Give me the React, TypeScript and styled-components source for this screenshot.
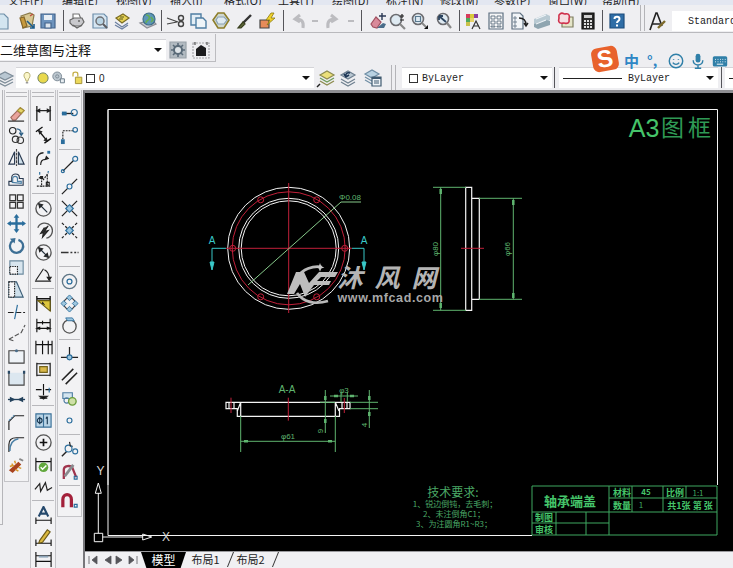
import React from 'react';
import styled, { createGlobalStyle } from 'styled-components';

const GlobalStyle = createGlobalStyle`
  html, body {
    margin: 0;
    padding: 0;
    background: #eeeef1;
    overflow: hidden;
  }
`;

const UI_FONT = '"Noto Sans CJK SC", "Liberation Sans", sans-serif';
const MONO_FONT = '"Liberation Mono", monospace';

const Page = styled.div`
  position: relative;
  width: 733px;
  height: 568px;
  display: flex;
  flex-direction: column;
  overflow: hidden;
  background: #eeeef1;
  font-family: ${UI_FONT};
  color: #111;
`;

const MenuBar = styled.div`
  height: 5px;
  flex: none;
  display: flex;
  align-items: flex-end;
  padding-left: 8px;
  gap: 15px;
  background: #e3e7f1;
  overflow: hidden;
`;

const MenuItem = styled.span`
  flex: none;
  width: 39px;
  font-size: 11px;
  line-height: 11px;
  margin-bottom: -1px;
  white-space: nowrap;
  color: #222;
`;

const ToolRow = styled.div`
  height: 28px;
  flex: none;
  display: flex;
  align-items: flex-end;
  padding-bottom: 1px;
  box-sizing: border-box;
  border-bottom: 1px solid #b9b9bd;
  background: #efeff2;
`;

const GroupRow = styled.div`
  height: 31px;
  flex: none;
  margin-top: 1px;
  display: flex;
  align-items: flex-start;
`;

const WorkspaceGroup = styled.div`
  width: 216px;
  height: 28px;
  box-sizing: border-box;
  display: flex;
  align-items: center;
  padding-top: 4px;
  border-right: 1px solid #bcbcc0;
  border-bottom: 1px solid #bcbcc0;
`;

const LayerRow = styled.div`
  height: 25px;
  flex: none;
  display: flex;
  align-items: center;
`;

const Slot = styled.div<{ $gap: number }>`
  flex: none;
  margin-left: ${(p) => p.$gap}px;
  display: flex;
  align-items: center;
  justify-content: center;
`;

const Sep = styled.div<{ $gap: number }>`
  flex: none;
  width: 1px;
  height: 21px;
  margin-left: ${(p) => p.$gap}px;
  background: #55555a;
`;

const Grip = styled.div<{ $gap: number }>`
  flex: none;
  width: 5px;
  box-sizing: border-box;
  align-self: stretch;
  margin-left: ${(p) => p.$gap}px;
  border-left: 1px solid #b4b4b8;
  border-right: 1px solid #b4b4b8;
`;

const Combo = styled.div<{ $w: number; $gap: number }>`
  flex: none;
  width: ${(p) => p.$w}px;
  height: 21px;
  margin-left: ${(p) => p.$gap}px;
  box-sizing: border-box;
  display: flex;
  align-items: center;
  position: relative;
  background: #fff;
  border-top: 1px solid #d4d4d8;
`;

const ComboArrow = styled.i`
  position: absolute;
  right: 4px;
  top: 8px;
  width: 0;
  height: 0;
  border-left: 4px solid transparent;
  border-right: 4px solid transparent;
  border-top: 4px solid #111;
`;

const WorkspaceLabel = styled.span`
  font-size: 13px;
  line-height: 20px;
  color: #111;
`;

const MonoLabel = styled.span<{ $gap?: number }>`
  font-family: ${MONO_FONT};
  font-size: 10px;
  color: #222;
  margin-left: ${(p) => p.$gap ?? 0}px;
  white-space: nowrap;
`;

const ZeroLabel = styled.span`
  font-family: "Liberation Sans", sans-serif;
  font-size: 10px;
  margin-left: 4px;
  color: #222;
`;

const Swatch = styled.i<{ $gap: number }>`
  flex: none;
  width: 9px;
  height: 9px;
  margin-left: ${(p) => p.$gap}px;
  box-sizing: border-box;
  border: 1px solid #333;
  background: #fff;
`;

const LineSample = styled.i`
  flex: none;
  width: 59px;
  height: 1px;
  margin-left: 4px;
  background: #222;
`;

const StyleInput = styled.div`
  flex: none;
  width: 61px;
  height: 20px;
  margin-left: 5px;
  display: flex;
  align-items: center;
  padding-left: 16px;
  box-sizing: border-box;
  background: #fff;
`;

const IconSvg = styled.svg<{ $size?: number }>`
  display: block;
  flex: none;
  width: ${(p) => p.$size ?? 20}px;
  height: ${(p) => p.$size ?? 20}px;
  fill: none;
  stroke: #222;
  stroke-width: 1.2;
`;

const Workspace = styled.div`
  flex: 1;
  min-height: 0;
  display: flex;
`;

const Docks = styled.div`
  flex: none;
  width: 83px;
  display: flex;
  align-items: flex-start;
  gap: 1px;
`;

const Stub = styled.div`
  flex: none;
  width: 3px;
  height: 435px;
  box-sizing: border-box;
  background: #f1f1f3;
  border-right: 1px solid #b5b5b9;
  border-bottom: 1px solid #b5b5b9;
`;

const DockColumn = styled.div<{ $w: number }>`
  flex: none;
  width: ${(p) => p.$w}px;
  box-sizing: border-box;
  padding-bottom: 5px;
  background: #f2f2f4;
  border: solid #c4c4c8;
  border-width: 0 1px 1px 1px;
`;

const DockGrip = styled.div`
  height: 5px;
  box-sizing: border-box;
  margin: 2px 1px 5px;
  border-top: 1px solid #b8b8bc;
  border-bottom: 1px solid #b8b8bc;
`;

const DockCell = styled.div`
  height: 22px;
  display: flex;
  align-items: center;
  justify-content: center;
`;

const DockSep = styled.div`
  height: 1px;
  margin: 3px 1px;
  background: #b8b8bc;
`;

const CanvasColumn = styled.div`
  flex: 1;
  min-width: 0;
  display: flex;
  flex-direction: column;
  border-top: 3px solid #8e8e92;
  border-left: 2px solid #77777b;
`;

const Canvas = styled.svg`
  display: block;
  flex: 1;
  min-height: 0;
  width: 100%;
  background: #000;
`;

const Stroke = styled.g<{ $c: string; $w?: number }>`
  fill: none;
  stroke: ${(p) => p.$c};
  stroke-width: ${(p) => p.$w ?? 1};
`;

const CadText = styled.text<{ $c: string; $size: number; $bold?: boolean; $mono?: boolean }>`
  fill: ${(p) => p.$c};
  stroke: none;
  font-family: ${(p) => (p.$mono ? '"Liberation Sans", sans-serif' : UI_FONT)};
  font-size: ${(p) => p.$size}px;
  font-weight: ${(p) => (p.$bold ? 700 : 400)};
  text-anchor: middle;
`;

const TabStrip = styled.div`
  height: 17px;
  flex: none;
  display: flex;
  align-items: flex-start;
  background: #f0f0f3;
  border-top: 1px solid #9a9a9e;
  box-sizing: border-box;
`;

const NavButton = styled.div<{ $gap: number }>`
  flex: none;
  width: 14px;
  height: 14px;
  margin: 1px 0 0 ${(p) => p.$gap}px;
  display: flex;
  align-items: center;
  justify-content: center;
`;

const ModelTab = styled.div`
  flex: none;
  width: 45px;
  height: 16px;
  margin-left: 1px;
  text-align: center;
  background: #000;
  color: #fff;
  font-size: 12px;
  line-height: 15px;
  clip-path: polygon(0 0, 100% 0, 88% 100%, 12% 100%);
`;

const LayoutTab = styled.div`
  flex: none;
  position: relative;
  width: 45px;
  height: 16px;
  box-sizing: border-box;
  padding-right: 6px;
  text-align: center;
  font-size: 11px;
  line-height: 15px;
  color: #222;

  &::after {
    content: '';
    position: absolute;
    right: 0;
    top: 0;
    width: 1px;
    height: 15px;
    background: #333;
    transform: skewX(-22deg);
  }
`;

const ImeBar = styled.div`
  position: absolute;
  left: 592px;
  top: 45px;
  width: 141px;
  height: 27px;
  display: flex;
  align-items: center;
  color: #2f86c5;
`;

const ImeLogo = styled.div`
  flex: none;
  width: 26px;
  height: 24px;
  border-radius: 6px;
  background: #e8622c;
  transform: rotate(-10deg);
  display: flex;
  align-items: center;
  justify-content: center;
  color: #fff;
  font-family: "Liberation Sans", sans-serif;
  font-size: 24px;
  font-weight: 700;
  line-height: 24px;
`;

const ImeGlyph = styled.span<{ $gap: number; $size: number }>`
  flex: none;
  margin-left: ${(p) => p.$gap}px;
  font-size: ${(p) => p.$size}px;
  font-weight: 700;
  line-height: 27px;
  padding-top: 3px;
`;

const ImeIcon = styled.span<{ $gap: number }>`
  flex: none;
  margin-left: ${(p) => p.$gap}px;
  margin-top: 5px;
`;

const BLUE = '#2f7fa8';
const DISABLED = '#bcbcc0';

const icons: Record<string, React.ReactNode> = {
  newdoc: <path d="M2 3h10l4 4v11H2z" fill="#d3e5f0" stroke="#6f8fa8" />,
  open: (
    <>
      <path d="M3 5l9-3 4 2-2 11-9 2z" fill="#d8c893" stroke="#8a7a4a" />
      <path d="M2 7l4-1 3 9-4 2z" fill="#c79a3d" stroke="#84662a" />
      <path d="M9 10l7 7m-4 0h4v-4" stroke="#1d5c8a" strokeWidth="1.6" />
      <path d="M12 5l3-2" stroke="#c0483a" />
    </>
  ),
  save: (
    <>
      <path d="M3 3h14v14H3z" fill="#6d93bd" stroke="#44648c" />
      <path d="M6 4h8v5H6z" fill="#e8eef4" stroke="none" />
      <path d="M7 12h6v5H7z" fill="#dce5ee" stroke="#44648c" />
    </>
  ),
  plot: (
    <>
      <path d="M6 3h6l2 5H6z" fill="#fff" stroke="#777" />
      <path d="M3 9l4-2h8l2 4-3 4H6l-3-3z" fill="#c9c9cd" stroke="#666" />
      <path d="M6 14l4 3 5-3" stroke="#666" />
      <circle cx="12" cy="10" r="1" fill="#666" stroke="none" />
    </>
  ),
  preview: (
    <>
      <path d="M3 3h11l3 3v11H3z" fill="#d6e6f2" stroke="#6d8eaa" />
      <circle cx="10" cy="10" r="4" fill="#b9d4e4" stroke="#6f6f73" strokeWidth="1.5" />
      <path d="M13 13l4 4" stroke="#5b5b5f" strokeWidth="2" />
    </>
  ),
  publish: (
    <>
      <path d="M4 7l7-4 6 4-7 5z" fill="#e8d355" stroke="#7b6c22" />
      <path d="M3 11l7 5 6-4" stroke="#6b7fa0" />
      <path d="M3 14l7 4 6-4" stroke="#6b7fa0" />
      <path d="M8 6h4M7 8h4" stroke="#5a5a20" />
    </>
  ),
  globe: (
    <>
      <path d="M2 12l7 5 9-4-4-4z" fill="#c9cbd2" stroke="#8a8c94" />
      <circle cx="11" cy="8" r="6" fill="#5d97b8" stroke="#3f6f8a" />
      <path d="M8 4c3 0 4 2 3 4s-3 1-3 4M13 6l2 3-2 2" stroke="#65ad55" strokeWidth="1.6" />
    </>
  ),
  cut: (
    <>
      <path d="M1 7l11 4M1 13l10-2" stroke="#444" />
      <circle cx="15" cy="7" r="2.5" stroke="#444" strokeWidth="1.4" />
      <circle cx="15" cy="13" r="2.5" stroke="#444" strokeWidth="1.4" />
    </>
  ),
  copy: (
    <>
      <path d="M2 3h10v11H2z" fill="#e2edf5" stroke="#4f7ea3" strokeWidth="1.4" />
      <path d="M7 7h7l3 3v7H7z" fill="#eef4f8" stroke="#4f7ea3" strokeWidth="1.4" />
    </>
  ),
  paste: (
    <>
      <path d="M7 2h6l5 7-5 8H7L2 9z" fill="#cfd7cf" stroke="#8d7e2a" strokeWidth="1.6" />
      <path d="M7 6h6l3 3-3 4H7L5 9z" fill="#dfeaf1" stroke="#8aa2b5" />
    </>
  ),
  match: (
    <>
      <path d="M16 4L8 12" stroke="#333" strokeWidth="2.4" />
      <path d="M8 11l2 2-4 4H3z" fill="#5f6b3a" stroke="#3a4020" />
    </>
  ),
  block: (
    <>
      <path d="M2 9h9v8H2z" fill="#e78b5a" stroke="#444" />
      <path d="M13 2l-5 7h4l-3 5 8-7h-4l3-5z" fill="#f1d22c" stroke="#8a7a10" strokeWidth="0.8" />
    </>
  ),
  undo: <path d="M15 17c1-6-1-9-7-9M12 4L7 8l5 3" stroke={DISABLED} strokeWidth="3" />,
  redo: <path d="M5 17c-1-6 1-9 7-9M8 4l5 4-5 3" stroke={DISABLED} strokeWidth="3" />,
  pan: (
    <>
      <path d="M3 13l5-7 5 5-4 6-4-1z" fill="#d98a9a" stroke="#a0505f" />
      <path d="M14 2v7M11 5h7" stroke="#2c3a55" strokeWidth="1.4" />
      <path d="M9 17h7l2-4-3-1z" fill="#4a6d8a" stroke="none" />
    </>
  ),
  zoomrt: (
    <>
      <circle cx="8" cy="9" r="5.5" fill="#dfeaf2" stroke="#6c6c70" strokeWidth="1.6" />
      <path d="M12 13l5 5" stroke="#888" strokeWidth="2.2" />
      <path d="M14 3v4M12 5h4M12 9h4" stroke="#222" />
    </>
  ),
  zoomwin: (
    <>
      <circle cx="8" cy="8" r="5.5" fill="#dfeaf2" stroke="#6c6c70" strokeWidth="1.6" />
      <path d="M5.5 5.5h5v5h-5z" stroke="#5a7a90" />
      <path d="M12 12l4 4" stroke="#888" strokeWidth="2" />
      <path d="M14 18h4v-4z" fill="#111" stroke="none" />
    </>
  ),
  zoomprev: (
    <>
      <circle cx="9" cy="8" r="5.5" fill="#dfeaf2" stroke="#6c6c70" strokeWidth="1.6" />
      <path d="M13 12l4 5" stroke="#888" strokeWidth="2.2" />
      <path d="M5 5l7 6M5 5v4M5 5h4" stroke="#2d4560" strokeWidth="1.8" />
    </>
  ),
  prop: (
    <>
      <path d="M3 3h4v4H3z" fill="#d73c5c" stroke="none" />
      <path d="M7 3h4v4H7z" fill="#d8c93a" stroke="none" />
      <path d="M11 3h4v4h-4z" fill="#8a3ea0" stroke="none" />
      <path d="M3 7h4v4H3z" fill="#4fa85c" stroke="none" />
      <path d="M7 7h4v4H7z" fill="#e7d26b" stroke="none" />
      <path d="M3 11h4v4H3z" fill="#c9c14a" stroke="none" />
      <path d="M9 18l4-8 4 8M10.5 15h5" stroke="#333" />
    </>
  ),
  design: (
    <>
      <path d="M3 2h14v16H3z" fill="#f5f5f6" stroke="#5d6f80" />
      <path d="M5 5h4v3H5zM11 5h4v3h-4zM5 10h4v3H5zM11 10h4v3h-4zM5 15h4v1H5zM11 15h4v1h-4z" stroke="#5d6f80" strokeWidth="0.9" />
    </>
  ),
  toolp: (
    <>
      <path d="M3 2h8l3 3v13H3z" fill="#f2f5f8" stroke="#5d6f80" />
      <path d="M5 6h2v2H5zM5 10h2v2H5zM5 14h2v2H5z" stroke="#5d6f80" strokeWidth="0.8" />
      <path d="M10 7c5 0 7 2 7 7M15 12l2 3 2-3" stroke="#222" strokeWidth="1.4" />
    </>
  ),
  sheet: (
    <>
      <path d="M2 8l12-5 4 2v4L6 15 2 13z" fill="#b8c9d2" stroke="none" />
      <path d="M2 13l12-4 4 1v4L6 18l-4-2z" fill="#8fa5b0" stroke="none" />
      <path d="M4 8l10-4M4 13l10-4" stroke="#eef3f6" />
    </>
  ),
  markup: (
    <>
      <path d="M7 16h11V6H7z" fill="#e5e5c8" stroke="#7f7f60" />
      <path d="M5 3c2-2 4 0 5 0s3-1 4 1 0 3 0 4 1 3-1 4-3 0-4 0-4 1-5-1 0-3 0-4-1-3 1-4z" fill="#f6dfe2" stroke="#cf2f4a" strokeWidth="1.6" />
    </>
  ),
  calc: (
    <>
      <path d="M4 2h12v16H4z" fill="#2a2a2a" stroke="#111" />
      <path d="M6 4h8v3H6z" fill="#cfcfcf" stroke="none" />
      <path d="M6 9h2v2H6zM9 9h2v2H9zM12 9h2v2h-2zM6 12h2v2H6zM9 12h2v2H9zM12 12h2v2h-2zM6 15h2v2H6zM9 15h2v2H9zM12 15h2v2h-2z" fill="#ddd" stroke="none" />
    </>
  ),
  help: (
    <>
      <path d="M3 3h14v14H3z" fill="#2f6da6" stroke="#1d4d7c" />
      <path d="M7.5 8c0-3 5-3 5 0 0 2-2.5 2-2.5 4M10 13.5v2" stroke="#fff" strokeWidth="2" />
    </>
  ),
  textstyle: (
    <>
      <path d="M3 19L9 2h1l5 13M5 13h8" stroke="#222" strokeWidth="1.6" />
      <path d="M11 17l7-7" stroke="#7d6a2a" strokeWidth="2.4" />
    </>
  ),
  wsgear: (
    <>
      <path d="M2 2h16v16H2z" fill="#b2bac1" stroke="#9aa2a9" />
      <circle cx="10" cy="10" r="4" fill="#dfe4e8" stroke="#5a6a78" strokeWidth="2" />
      <path d="M10 3v3M10 14v3M3 10h3M14 10h3M5 5l2 2M13 13l2 2M15 5l-2 2M7 13l-2 2" stroke="#5a6a78" strokeWidth="1.6" />
    </>
  ),
  wsdark: (
    <>
      <path d="M2 3h16v15H2z" stroke="#a6a6aa" strokeDasharray="2 1" />
      <path d="M5 9l5-4 5 3v8H5z" fill="#1c1c1e" stroke="none" />
      <path d="M4 2v3M16 2v3" stroke="#555" />
    </>
  ),
  layers: (
    <>
      <path d="M2 8l8-4 8 4-8 4z" fill="#b9c7d2" stroke="#7d8c98" />
      <path d="M2 11l8 4 8-4M2 14l8 4 8-4" stroke="#7d8c98" />
    </>
  ),
  layersYellow: (
    <>
      <path d="M4 7l7-4 7 4-7 4z" fill="#ece07a" stroke="#8e8c50" />
      <path d="M4 10l7 4 7-4" stroke="#6f9c5a" strokeWidth="1.4" />
      <path d="M4 13l7 4 7-4" stroke="#8e8c50" strokeWidth="1.4" />
      <path d="M1 19l3-3" stroke="#222" strokeWidth="1.4" />
    </>
  ),
  layersBack: (
    <>
      <path d="M3 7l7-4 7 4-7 4z" fill="#b9c7d2" stroke="#6f8090" />
      <path d="M3 11l7 4 7-4M3 14l7 4 7-4" stroke="#6f8090" />
      <path d="M12 5c-3-1-5 1-4 4M6 6l2 3 3-2" stroke="#1c3555" strokeWidth="1.6" />
    </>
  ),
  layersDoc: (
    <>
      <path d="M2 6l7-4 7 4-7 4z" fill="#b9d2e2" stroke="#6f8ea5" />
      <path d="M2 9l7 4M2 12l7 4" stroke="#6f8ea5" />
      <path d="M9 9h9v9H9z" fill="#eef3f7" stroke="#405a70" />
      <path d="M9 9h9v2H9z" fill="#405a70" stroke="none" />
      <path d="M11 13h5M11 15h5" stroke="#405a70" />
    </>
  ),
  bulb: (
    <>
      <path d="M8 11C5 8 6 3 10 3s5 5 2 8l-1 3H9z" fill="#fbf6c8" stroke="#b0a768" />
      <path d="M8.5 16h3" stroke="#777" strokeWidth="1.4" />
    </>
  ),
  sun: <circle cx="10" cy="10" r="6.4" fill="#e9d94d" stroke="#6e7f60" strokeWidth="1.2" />,
  freeze: (
    <>
      <circle cx="9" cy="8" r="5.5" fill="#bcc7cf" stroke="#7e8c98" />
      <circle cx="9" cy="8" r="2" stroke="#7e8c98" />
      <path d="M13 11h5v5h-5z" fill="#e8eef2" stroke="#6b7b88" />
    </>
  ),
  lock: (
    <>
      <path d="M5 8V5c0-3 6-3 6 0v3" stroke="#c5b04a" strokeWidth="1.6" />
      <path d="M8 9h8v8H8z" fill="#ecd95c" stroke="#a59336" />
    </>
  ),
  eraser: (
    <>
      <path d="M4 14L14 4l4 3-9 10H6z" fill="#e9a49c" stroke="#a06c60" />
      <path d="M11 7l4 4" stroke="#a06c60" />
      <path d="M14 4l4 3-3 3-4-3z" fill="#e6d46a" stroke="#a59336" />
      <path d="M1 18h17" stroke="#222" />
    </>
  ),
  copyObj: (
    <>
      <circle cx="6" cy="5" r="3.4" />
      <circle cx="9" cy="14" r="3.4" stroke="#333" />
      <circle cx="14" cy="15" r="3.4" stroke="#333" />
      <path d="M10 3c4 0 5 3 5 6M13 7l2 3 2-3" stroke="#2d5f85" strokeWidth="1.3" />
    </>
  ),
  mirror: (
    <>
      <path d="M10 1v18" strokeDasharray="3 1" stroke="#444" />
      <path d="M8 4v13H2z" stroke="#2a3a50" />
      <path d="M12 4v13h6z" stroke="#2a3a50" fill="#cfe0eb" />
    </>
  ),
  offset: (
    <>
      <path d="M2 16v-4h3V8c0-5 8-5 8 0v1h4v7z" stroke="#2a3a50" />
      <path d="M5 13h1V9c0-3 5-3 5 0v3h4v2z" stroke="#4a7fa5" />
    </>
  ),
  array: <path d="M3 3h6v6H3zM11 3h6v6h-6zM3 11h6v6H3zM11 11h6v6h-6z" strokeWidth="1.3" stroke="#333" />,
  move: (
    <>
      <path d="M10 2v16M2 10h16" stroke="#2a6d9c" strokeWidth="2.4" />
      <path d="M10 0l3 4H7zM10 20l3-4H7zM0 10l4-3v6zM20 10l-4-3v6z" fill="#2a6d9c" stroke="none" />
    </>
  ),
  rotate: (
    <>
      <path d="M6 5a7 7 0 1 0 6-1" stroke="#3d6f95" strokeWidth="2.4" />
      <path d="M3 3l6-1-1 6z" fill="#3d6f95" stroke="none" />
    </>
  ),
  scale: (
    <>
      <path d="M3 3h14v14H3z" fill="#d8e5ee" stroke="#6d8ba0" />
      <path d="M3 9h8v8H3z" fill="#f6f6f8" stroke="#222" strokeDasharray="1.5 1" />
    </>
  ),
  stretch: (
    <>
      <path d="M2 2h8l7 16H2z" fill="#cfe0eb" stroke="#3d5f78" />
      <path d="M2 2h6v16H2z" fill="#f6f6f8" stroke="#222" strokeDasharray="1.5 1" />
    </>
  ),
  trim: (
    <>
      <path d="M1 11h18" stroke="#222" strokeDasharray="6 2" />
      <path d="M11 3L8 18" stroke="#2a6d9c" />
    </>
  ),
  extend: <path d="M2 16L15 9l4-8M2 16l6 2" stroke="#555" strokeDasharray="5 2" />,
  breakRect: (
    <>
      <path d="M2 5h16v13H2z" fill="#eff3f7" stroke="#444" />
      <circle cx="10" cy="5" r="1.6" fill="#4a6d8a" stroke="none" />
    </>
  ),
  breakCorner: (
    <>
      <path d="M2 5v13h16V5" fill="#dce7f0" stroke="#444" />
      <path d="M2 3v3M18 3v3" stroke="#2a4a66" strokeWidth="2.4" />
    </>
  ),
  join: (
    <>
      <path d="M1 10h18" stroke="#23415c" strokeWidth="1.4" />
      <path d="M3 7l6 3-6 3zM17 7l-6 3 6 3z" fill="#23415c" stroke="none" />
    </>
  ),
  chamfer: (
    <>
      <path d="M2 19V10l6-6h10" stroke="#222" />
      <path d="M2 9l6-6" stroke="#5a8fb5" strokeDasharray="2 1" />
    </>
  ),
  fillet: (
    <>
      <path d="M2 19V11c0-5 3-7 8-7h8" stroke="#222" />
      <path d="M3 18c0-8 3-12 9-13" stroke="#4a7fa5" strokeWidth="1.6" />
    </>
  ),
  explode: (
    <>
      <path d="M2 15l10-9 3 3-9 9z" fill="#a8431f" stroke="none" />
      <path d="M5 8l2 3M9 14l3 2M3 11l3-1M12 12l3 1M8 5l1 3" stroke="#d9992d" strokeWidth="1.6" />
      <path d="M13 3l4 2" stroke="#888" strokeWidth="2" />
    </>
  ),
  dimLinear: (
    <>
      <path d="M3 2v16M17 2v16" strokeWidth="1.4" />
      <path d="M3 7h14" stroke="#111" />
      <path d="M3 7l3-1.5v3zM17 7l-3-1.5v3z" fill="#111" />
    </>
  ),
  dimAligned: (
    <>
      <path d="M2 6L9 1M11 18l7-5M5 5l9 11" stroke="#111" strokeWidth="1.4" />
      <path d="M5 5l1 3 2-2zM14 16l-1-3-2 2z" fill="#111" />
    </>
  ),
  dimArc: (
    <>
      <path d="M3 18V12c0-4 3-7 7-7" stroke="#222" strokeWidth="1.4" />
      <path d="M7 18c0-4 2-6 5-6" stroke="#222" />
      <path d="M14 3h3v3h-3z" fill="#2a6d9c" stroke="none" />
      <path d="M12 12l3-1-2-2z" fill="#222" />
    </>
  ),
  dimOrd: (
    <>
      <path d="M3 17h14M8 8v10M14 5v13M3 11l4-4 3 3 5-7" stroke="#222" strokeDasharray="2 1" />
      <path d="M7 7h2v2H7zM13 13h3v3h-3z" stroke="#222" />
      <path d="M6 2v3M15 1v2" stroke="#2a6d9c" />
    </>
  ),
  dimRadius: (
    <>
      <circle cx="10" cy="10" r="8" stroke="#555" strokeWidth="1.4" />
      <path d="M14 14L5 5" stroke="#23303c" />
      <path d="M5 5l4 1-3 3z" fill="#23303c" />
    </>
  ),
  dimJog: (
    <>
      <path d="M4 7a8 8 0 1 1 9 11" stroke="#555" strokeWidth="1.4" />
      <path d="M15 5l-4 6 4-1-6 7 1-5-3 1 4-6" fill="#333" stroke="#222" />
    </>
  ),
  dimDia: (
    <>
      <circle cx="10" cy="10" r="8" stroke="#555" strokeWidth="1.4" />
      <path d="M5 5l10 10" stroke="#23303c" />
      <path d="M5 5l4 1-3 3zM15 15l-4-1 3-3z" fill="#23303c" />
    </>
  ),
  dimAng: (
    <>
      <path d="M1 17h17M2 16L10 4" stroke="#222" />
      <path d="M11 5c4 2 5 7 5 10" stroke="#222" />
      <path d="M16 16l-2-3h4z" fill="#222" />
    </>
  ),
  quick: (
    <>
      <path d="M3 2v16M17 2v16M3 5h14" stroke="#111" strokeWidth="1.4" />
      <path d="M4 7l13 11V7z" fill="#ddc63c" stroke="#6a5c12" />
      <path d="M9 8l3 4-4-2z" fill="#222" stroke="none" />
    </>
  ),
  baseline: <path d="M3 3v14M17 3v14M3 7h14M3 13h14M9 5v4M3 13l3-1v2zM17 13l-3-1v2z" stroke="#111" />,
  contin: <path d="M2 3v14M9 3v14M15 3v14M19 3v14M2 7h17" stroke="#111" />,
  space: (
    <>
      <path d="M3 3v14M17 3v14M3 4h14M3 16h14" stroke="#111" />
      <path d="M6 7h8v6H6z" fill="#d9b84a" stroke="#76641c" />
    </>
  ),
  dimBreak: (
    <>
      <path d="M2 8h6M12 8h6M10 2v12M6 17h8" stroke="#111" />
      <path d="M6 15h8l-4 3z" fill="#111" />
      <path d="M16 6v5" stroke="#2a6d9c" />
    </>
  ),
  tol: (
    <>
      <path d="M2 3h16v14H2z" fill="#b9d4e6" stroke="#3a7098" />
      <path d="M10 3v14" stroke="#3a7098" />
      <circle cx="6" cy="10" r="2.5" stroke="#1c3b55" />
      <path d="M6 6v8M14 6v8M12.5 8l1.5-2" stroke="#1c3b55" strokeWidth="1.2" />
    </>
  ),
  centerMark: (
    <>
      <circle cx="10" cy="10" r="8" stroke="#555" strokeWidth="1.4" />
      <path d="M10 6v8M6 10h8" stroke="#111" strokeWidth="1.8" />
    </>
  ),
  inspect: (
    <>
      <path d="M2 3v14M18 3v14M2 7h16" stroke="#111" />
      <circle cx="10" cy="13" r="5" fill="#62a83e" stroke="none" />
      <path d="M7 13l2 2 4-4" stroke="#fff" strokeWidth="1.5" />
    </>
  ),
  jogLine: <path d="M1 13l5-6 1 8 5-9 2 8 5-3" stroke="#222" strokeWidth="1.3" />,
  dimText: (
    <>
      <path d="M5 11l5-10 5 10M7 8h6" stroke="#24486c" strokeWidth="2.2" />
      <path d="M2 12v7M18 12v7M2 15h16" stroke="#111" />
    </>
  ),
  dimEdit: (
    <>
      <path d="M2 12v7M18 12v7M2 16h16" stroke="#111" />
      <path d="M6 13l8-11 3 2-8 11-4 1z" fill="#dbb93e" stroke="#6d5a18" />
    </>
  ),
  dimUpdate: (
    <>
      <path d="M2 2v16M18 2v16M2 12h16M2 6h16" stroke="#111" />
      <path d="M5 7h10" stroke="#8ea5b8" strokeWidth="2" />
    </>
  ),
  snapEnd: (
    <>
      <path d="M2 10h12" stroke="#222" strokeWidth="1.4" />
      <path d="M2 8h5v4H2z" fill="#2a6d9c" stroke="none" />
      <circle cx="15" cy="9" r="3.2" stroke="#2a6d9c" />
    </>
  ),
  snapExt: (
    <>
      <path d="M3 14V5h11" stroke="#222" strokeDasharray="2 1" />
      <circle cx="16" cy="4" r="2.4" stroke="#2a6d9c" />
      <path d="M1 14h4v5H1z" fill="#2a6d9c" stroke="none" />
    </>
  ),
  snapLine: (
    <>
      <path d="M3 17L14 6" stroke="#222" strokeWidth="1.3" />
      <circle cx="16" cy="4" r="2.6" stroke="#2a6d9c" />
      <circle cx="3" cy="17" r="1.6" stroke="#2a6d9c" />
    </>
  ),
  snapMid: (
    <>
      <path d="M2 18L18 2" stroke="#222" strokeWidth="1.3" />
      <circle cx="10" cy="10" r="2.6" fill="#f2f2f4" stroke="#2a6d9c" />
    </>
  ),
  snapInt: (
    <>
      <path d="M2 2l16 16M18 2L2 18" stroke="#222" strokeWidth="1.3" />
      <path d="M10 6l4 4-4 4-4-4z" fill="#9ec6de" stroke="#2a6d9c" />
    </>
  ),
  snapApp: (
    <>
      <path d="M2 2l16 16M18 2L2 18" stroke="#222" strokeWidth="1.3" strokeDasharray="3 2" />
      <path d="M10 6l4 4-4 4-4-4z" fill="#9ec6de" stroke="#2a6d9c" />
    </>
  ),
  snapDash: <path d="M1 10h8M11 10h2M15 10h2M18.5 10h1" stroke="#333" strokeWidth="1.4" />,
  snapCenter: (
    <>
      <circle cx="10" cy="10" r="7.5" stroke="#5f7686" strokeWidth="1.4" />
      <circle cx="10" cy="10" r="2.6" stroke="#2a6d9c" strokeWidth="1.3" />
    </>
  ),
  snapQuad: (
    <>
      <circle cx="10" cy="10" r="6" stroke="#3d3d40" />
      <path d="M10 1l3 3-3 3-3-3zM10 13l3 3-3 3-3-3zM1 10l3-3 3 3-3 3zM13 10l3-3 3 3-3 3z" fill="#9ec6de" stroke="#2a6d9c" strokeWidth="0.9" />
    </>
  ),
  snapTan: (
    <>
      <circle cx="10" cy="11" r="7" stroke="#555" strokeWidth="1.4" />
      <path d="M6 2h7l2 3h-7z" fill="#9ec6de" stroke="#2a6d9c" strokeWidth="0.9" />
    </>
  ),
  snapPerp: (
    <>
      <path d="M1 13h18M10 2v11" stroke="#222" strokeWidth="1.3" />
      <circle cx="10" cy="13" r="2.6" fill="#9ec6de" stroke="#2a6d9c" />
    </>
  ),
  snapPar: <path d="M2 14L14 2M6 18L18 6" stroke="#222" strokeWidth="1.6" />,
  snapIns: (
    <>
      <path d="M3 4h10v6H3z" fill="#d3e5f0" stroke="#4f7ea3" />
      <circle cx="7" cy="12" r="2.8" stroke="#4f7ea3" />
      <circle cx="13" cy="13" r="4" fill="#cfe0a8" stroke="#6a9c3a" strokeWidth="1.4" />
    </>
  ),
  snapNode: <circle cx="10" cy="10" r="2.6" stroke="#2a6d9c" />,
  snapNear: (
    <>
      <path d="M2 17L13 6" stroke="#222" strokeWidth="1.5" />
      <circle cx="9" cy="9" r="3.6" fill="#f2f2f4" stroke="#2a6d9c" />
      <circle cx="16" cy="12" r="2.6" stroke="#2a6d9c" />
      <path d="M10 2l1 5" stroke="#222" />
    </>
  ),
  snapNone: (
    <>
      <path d="M4 18V8c0-4 7-5 9-2l4 10" stroke="#a0344c" strokeWidth="2.4" />
      <path d="M5 15L14 3" stroke="#8a8a8e" strokeWidth="3" />
      <path d="M15 15h3v3h-3z" stroke="#2a6d9c" />
    </>
  ),
  magnet: (
    <>
      <path d="M3 17V9c0-7 9-7 9 0v8" stroke="#a3203a" strokeWidth="3.4" />
      <path d="M15 14h3v3h-3z" stroke="#2a6d9c" strokeWidth="1.3" />
    </>
  ),
};

const Icon = ({ name, size }: { name: string; size?: number }) => (
  <IconSvg viewBox="0 0 20 20" $size={size}>
    {icons[name]}
  </IconSvg>
);

const CaretSvg = styled(IconSvg)`
  width: 8px;
`;

const Caret = ({ color }: { color: string }) => (
  <CaretSvg viewBox="0 0 8 20">
    <path d="M1 10h6" stroke={color} strokeWidth="2" />
  </CaretSvg>
);

// [gap before the item, item]
const topTools: [number, string][] = [
  [-8, 'newdoc'], [6, 'open'], [0, 'save'], [5, '|'], [3, 'plot'], [3, 'preview'], [2, 'publish'], [6, 'globe'],
  [3, '|'], [4, 'cut'], [3, 'copy'], [2, 'paste'], [4, 'match'], [3, 'block'], [5, '|'], [4, 'undo'], [3, '-'],
  [4, 'redo'], [4, '-'], [6, '|'], [6, 'pan'], [0, 'zoomrt'], [2, 'zoomwin'], [4, 'zoomprev'], [5, '|'],
  [3, 'prop'], [3, 'design'], [3, 'toolp'], [3, 'sheet'], [3, 'markup'], [3, 'calc'], [4, '|'], [4, 'help'],
];

const dockOne = ['eraser', 'copyObj', 'mirror', 'offset', 'array', 'move', 'rotate', 'scale', 'stretch', 'trim', 'extend', 'breakRect', 'breakCorner', 'join', 'chamfer', 'fillet', 'explode'];
const dockTwo = ['dimLinear', 'dimAligned', 'dimArc', 'dimOrd', '|', 'dimRadius', 'dimJog', 'dimDia', 'dimAng', '|', 'quick', 'baseline', 'contin', 'space', 'dimBreak', '|', 'tol', 'centerMark', 'inspect', 'jogLine', '|', 'dimText', 'dimEdit', 'dimUpdate'];
const dockThree = ['snapEnd', 'snapExt', '|', 'snapLine', 'snapMid', 'snapInt', 'snapApp', 'snapDash', '|', 'snapCenter', 'snapQuad', 'snapTan', '|', 'snapPerp', 'snapPar', 'snapIns', 'snapNode', '|', 'snapNear', 'snapNone', '|', 'magnet'];

const menus = ['文件(F)', '编辑(E)', '视图(V)', '插入(I)', '格式(O)', '工具(T)', '绘图(D)', '标注(N)', '修改(M)', '参数(P)', '窗口(W)', '帮助(H)'];

const Dock = ({ names, w }: { names: string[]; w: number }) => (
  <DockColumn $w={w}>
    <DockGrip />
    {names.map((name, i) =>
      name === '|' ? (
        <DockSep key={i} />
      ) : (
        <DockCell key={i}>
          <Icon name={name} size={19} />
        </DockCell>
      )
    )}
  </DockColumn>
);

const GREEN = '#5fb56f';
const BRIGHT = '#45c46a';
const RED = '#c2203a';
const CYAN = '#39c8c8';

const holes = [0, 60, 120, 180, 240, 300].map((a) => ({
  x: 288.7 + 56 * Math.cos((a * Math.PI) / 180),
  y: 248.3 + 56 * Math.sin((a * Math.PI) / 180),
}));

const Drawing = () => (
  <Canvas viewBox="85 93 648 458" preserveAspectRatio="xMinYMin slice">
    <Stroke $c="#f4f4f4">
      <path d="M108 485V109.5H717.5V485M108 109.5V535.5H532" />
    </Stroke>

    <CadText x="644" y="137" $c={BRIGHT} $size={25} $mono>A3</CadText>
    <CadText x="688" y="136" $c="#2f9a55" $size={23} letterSpacing="4">图框</CadText>

    {/* front view */}
    <Stroke $c="#f4f4f4">
      <circle cx="288.7" cy="248.3" r="61" />
      <circle cx="288.7" cy="248.3" r="50" />
      <circle cx="288.7" cy="248.3" r="47.5" />
    </Stroke>
    <Stroke $c={RED}>
      <circle cx="288.7" cy="248.3" r="56.5" />
      <path d="M226 248.3H352M288.7 183V313" />
      {holes.map((h, i) => (
        <circle key={i} cx={h.x} cy={h.y} r="3" />
      ))}
    </Stroke>
    <Stroke $c="#86c98a">
      <path d="M248 285L341 202H361" />
    </Stroke>
    <CadText x="350" y="200" $c={GREEN} $size={8} $mono>Φ0.08</CadText>
    <Stroke $c={CYAN}>
      <path d="M226 248.3H212V262M352 248.3H364V262" />
      <path d="M210 262h4l-2 8zM362 262h4l-2 8z" fill={CYAN} />
    </Stroke>
    <CadText x="212" y="244" $c={CYAN} $size={10} $mono>A</CadText>
    <CadText x="364" y="244" $c={CYAN} $size={10} $mono>A</CadText>

    {/* side view */}
    <Stroke $c="#f4f4f4" $w={1.2}>
      <path d="M465.7 187.3h6v123h-6zM471.7 198.3h7.6v101h-7.6z" />
    </Stroke>
    <Stroke $c={RED}>
      <path d="M461 248.3h23" />
    </Stroke>
    <Stroke $c={GREEN}>
      <path d="M433 187.3h33M433 310.3h33M440.7 187.3v123M479 198.3h43M479 299.3h43M513.3 198.3v101" />
    </Stroke>
    <Stroke $c={GREEN} $w={2.5}>
      <path d="M440.7 189v5M440.7 303v5M513.3 200v5M513.3 293v5" />
    </Stroke>
    <CadText x="0" y="0" $c={GREEN} $size={8} $mono transform="translate(438 249) rotate(-90)">φ80</CadText>
    <CadText x="0" y="0" $c={GREEN} $size={8} $mono transform="translate(510 249) rotate(-90)">φ66</CadText>

    {/* section */}
    <CadText x="287" y="393" $c={GREEN} $size={10} $mono>A-A</CadText>
    <Stroke $c="#f4f4f4" $w={1.2}>
      <path d="M226 402.3H350V408.7H339.5V416.3H237.3V408.7H226z" />
      <path d="M229 402.3v6.4M234 402.3v6.4M342 402.3v6.4M347 402.3v6.4M240.7 402.3L237.3 411M335.3 402.3L339 411M240.7 402.3V416M335.3 402.3V416" />
    </Stroke>
    <Stroke $c={RED}>
      <path d="M231 397.7v15.3M288.3 397.7v23M344.3 398v15" />
    </Stroke>
    <Stroke $c={GREEN}>
      <path d="M240.7 416v36M335.3 416v36M240.7 441.3h94.6M325.3 390v43M320 402.3h15M330 396h28M341 392v10M347.3 392v10M369.3 390v38M350 402.3h28M350 408.7h28" />
    </Stroke>
    <Stroke $c={GREEN} $w={2.5}>
      <path d="M244 441.3h4M328 441.3h4M325.3 396v4M325.3 419v4M334 396h4M350 396h4M369.3 396v4M369.3 412v4" />
    </Stroke>
    <CadText x="288" y="439" $c={GREEN} $size={8} $mono>φ61</CadText>
    <CadText x="344" y="393" $c={GREEN} $size={8} $mono>φ3</CadText>
    <CadText x="0" y="0" $c={GREEN} $size={8} $mono transform="translate(323 431) rotate(-90)">9</CadText>
    <CadText x="0" y="0" $c={GREEN} $size={8} $mono transform="translate(367 425) rotate(-90)">4</CadText>

    {/* notes */}
    <CadText x="453" y="497" $c="#4aa866" $size={12}>技术要求:</CadText>
    <CadText x="455" y="507" $c="#4aa866" $size={8}>1、锐边倒钝，去毛刺；</CadText>
    <CadText x="454" y="517" $c="#4aa866" $size={8}>2、未注倒角C1；</CadText>
    <CadText x="454" y="527" $c="#4aa866" $size={8}>3、为注圆角R1~R3；</CadText>

    {/* title block */}
    <Stroke $c="#3fa860">
      <path d="M532 486H717V535H532zM532 512H717M609 486V535M532 523H609M556 512V535M586 512V535M609 498H717M632 486V512M663 486V512M686 486V498" />
    </Stroke>
    <CadText x="570" y="506" $c={BRIGHT} $size={13} $bold>轴承端盖</CadText>
    <CadText x="622" y="496" $c={BRIGHT} $size={9} $bold>材料</CadText>
    <CadText x="646" y="495" $c={BRIGHT} $size={8} $bold>45</CadText>
    <CadText x="675" y="496" $c={BRIGHT} $size={9} $bold>比例</CadText>
    <CadText x="698" y="496" $c="#3fa860" $size={8}>1:1</CadText>
    <CadText x="622" y="509" $c={BRIGHT} $size={9} $bold>数量</CadText>
    <CadText x="641" y="508" $c="#3fa860" $size={8}>1</CadText>
    <CadText x="690" y="509" $c={BRIGHT} $size={9} $bold>共1张 第 张</CadText>
    <CadText x="544" y="521" $c={BRIGHT} $size={9} $bold>制图</CadText>
    <CadText x="544" y="533" $c={BRIGHT} $size={9} $bold>审核</CadText>

    {/* UCS icon */}
    <Stroke $c="#f4f4f4">
      <path d="M94.3 533.3h8.4v8.4h-8.4zM98.3 533.3V493M102.7 537H143" />
      <path d="M98.3 483l-3 10.3h6zM142.7 534v6l9-3z" />
    </Stroke>
    <CadText x="100.5" y="475" $c="#d8d8d8" $size={12} $mono>Y</CadText>
    <CadText x="166" y="541" $c="#d8d8d8" $size={12} $mono>X</CadText>

    {/* watermark */}
    <Stroke $c="#b9b9b9" $w={2.6}>
      <path d="M322 267a26 26 0 0 0-25 10M297 293c6 9 18 12 31 8" />
    </Stroke>
    <path d="M287 294l9-22h8l5 11 10-11h19l-3 5h-14l-4 4h14l-2 4h-15l-9 12-5-13-6 10z" fill="#bdbdbd" />
    <path d="M320 263l1.2 3.2 3.2 1.2-3.2 1.2-1.2 3.2-1.2-3.2-3.2-1.2 3.2-1.2z" fill="#c8c8c8" />
    <CadText x="393" y="287" $c="#b4b4b4" $size={25} $bold letterSpacing="12" fontStyle="italic">沐风网</CadText>
    <CadText x="390.5" y="302" $c="#a8a8a8" $size={12.5} $bold $mono letterSpacing="0.6">www.mfcad.com</CadText>
  </Canvas>
);

const Arrow = ({ d }: { d: string }) => (
  <IconSvg viewBox="0 0 12 12" $size={12}>
    <path d={d} fill="#55555a" stroke="#55555a" strokeWidth="0.8" />
  </IconSvg>
);

export default function App() {
  return (
    <Page>
      <GlobalStyle />
      <MenuBar>
        {menus.map((m) => (
          <MenuItem key={m}>{m}</MenuItem>
        ))}
      </MenuBar>

      <ToolRow>
        {topTools.map(([gap, name], i) =>
          name === '|' ? (
            <Sep key={i} $gap={gap} />
          ) : (
            <Slot key={i} $gap={gap}>
              {name === '-' ? <Caret color={DISABLED} /> : <Icon name={name} />}
            </Slot>
          )
        )}
        <Grip $gap={13} />
        <Slot $gap={2}>
          <Icon name="textstyle" />
        </Slot>
        <StyleInput>
          <MonoLabel>Standard</MonoLabel>
        </StyleInput>
      </ToolRow>

      <GroupRow>
        <WorkspaceGroup>
          <Combo $w={166} $gap={0}>
            <WorkspaceLabel>二维草图与注释</WorkspaceLabel>
            <ComboArrow />
          </Combo>
          <Slot $gap={2}>
            <Icon name="wsgear" />
          </Slot>
          <Slot $gap={3}>
            <Icon name="wsdark" />
          </Slot>
        </WorkspaceGroup>
      </GroupRow>

      <LayerRow>
        <Slot $gap={-5}>
          <Icon name="layers" />
        </Slot>
        <Combo $w={298} $gap={1}>
          <Slot $gap={3}>
            <Icon name="bulb" size={16} />
          </Slot>
          <Slot $gap={0}>
            <Icon name="sun" size={16} />
          </Slot>
          <Slot $gap={-1}>
            <Icon name="freeze" size={16} />
          </Slot>
          <Slot $gap={3}>
            <Icon name="lock" size={16} />
          </Slot>
          <Swatch $gap={1} />
          <ZeroLabel>0</ZeroLabel>
          <ComboArrow />
        </Combo>
        <Slot $gap={2}>
          <Icon name="layersYellow" />
        </Slot>
        <Slot $gap={2}>
          <Icon name="layersBack" />
        </Slot>
        <Slot $gap={5}>
          <Icon name="layersDoc" />
        </Slot>
        <Grip $gap={8} />
        <Combo $w={150} $gap={6}>
          <Swatch $gap={7} />
          <MonoLabel $gap={4}>ByLayer</MonoLabel>
          <ComboArrow />
        </Combo>
        <Sep $gap={2} />
        <Combo $w={159} $gap={4}>
          <LineSample />
          <MonoLabel $gap={6}>ByLayer</MonoLabel>
          <ComboArrow />
        </Combo>
        <Sep $gap={3} />
        <Combo $w={30} $gap={3}>
          <LineSample />
        </Combo>
      </LayerRow>

      <Workspace>
        <Docks>
          <Stub />
          <Dock names={dockOne} w={25} />
          <Dock names={dockTwo} w={26} />
          <Dock names={dockThree} w={25} />
        </Docks>
        <CanvasColumn>
          <Drawing />
          <TabStrip>
            <NavButton $gap={1}>
              <Arrow d="M2 2v8M10 2v8L5 6z" />
            </NavButton>
            <NavButton $gap={1}>
              <Arrow d="M9 2v8L3 6z" />
            </NavButton>
            <NavButton $gap={-3}>
              <Arrow d="M3 2v8l6-4z" />
            </NavButton>
            <NavButton $gap={0}>
              <Arrow d="M10 2v8M2 2v8l5-4z" />
            </NavButton>
            <ModelTab>模型</ModelTab>
            <LayoutTab>布局1</LayoutTab>
            <LayoutTab>布局2</LayoutTab>
          </TabStrip>
        </CanvasColumn>
      </Workspace>

      <ImeBar>
        <ImeLogo>S</ImeLogo>
        <ImeGlyph $gap={6} $size={15}>中</ImeGlyph>
        <ImeGlyph $gap={8} $size={14}>°,</ImeGlyph>
        <ImeIcon $gap={11}>
          <IconSvg viewBox="0 0 20 20" $size={16}>
            <circle cx="10" cy="10" r="8.4" stroke={BLUE} strokeWidth="1.8" />
            <path d="M7 7.5v1M13 7.5v1M6 12c2 3 6 3 8 0" stroke={BLUE} strokeWidth="1.8" />
          </IconSvg>
        </ImeIcon>
        <ImeIcon $gap={6}>
          <IconSvg viewBox="0 0 20 20" $size={16}>
            <rect x="7" y="1" width="6" height="11" rx="3" fill={BLUE} stroke="none" />
            <path d="M4 9c0 8 12 8 12 0M10 15v4M6 19h8" stroke={BLUE} strokeWidth="1.8" />
          </IconSvg>
        </ImeIcon>
        <ImeIcon $gap={6}>
          <IconSvg viewBox="0 0 20 20" $size={16}>
            <rect x="1" y="4" width="18" height="13" rx="2" fill={BLUE} stroke="none" />
            <path d="M4 8h1M7 8h1M10 8h1M13 8h1M16 8h1M4 11h1M7 11h1M10 11h1M13 11h1M16 11h1M6 14h8" stroke="#fff" strokeWidth="1.2" />
          </IconSvg>
        </ImeIcon>
      </ImeBar>
    </Page>
  );
}
